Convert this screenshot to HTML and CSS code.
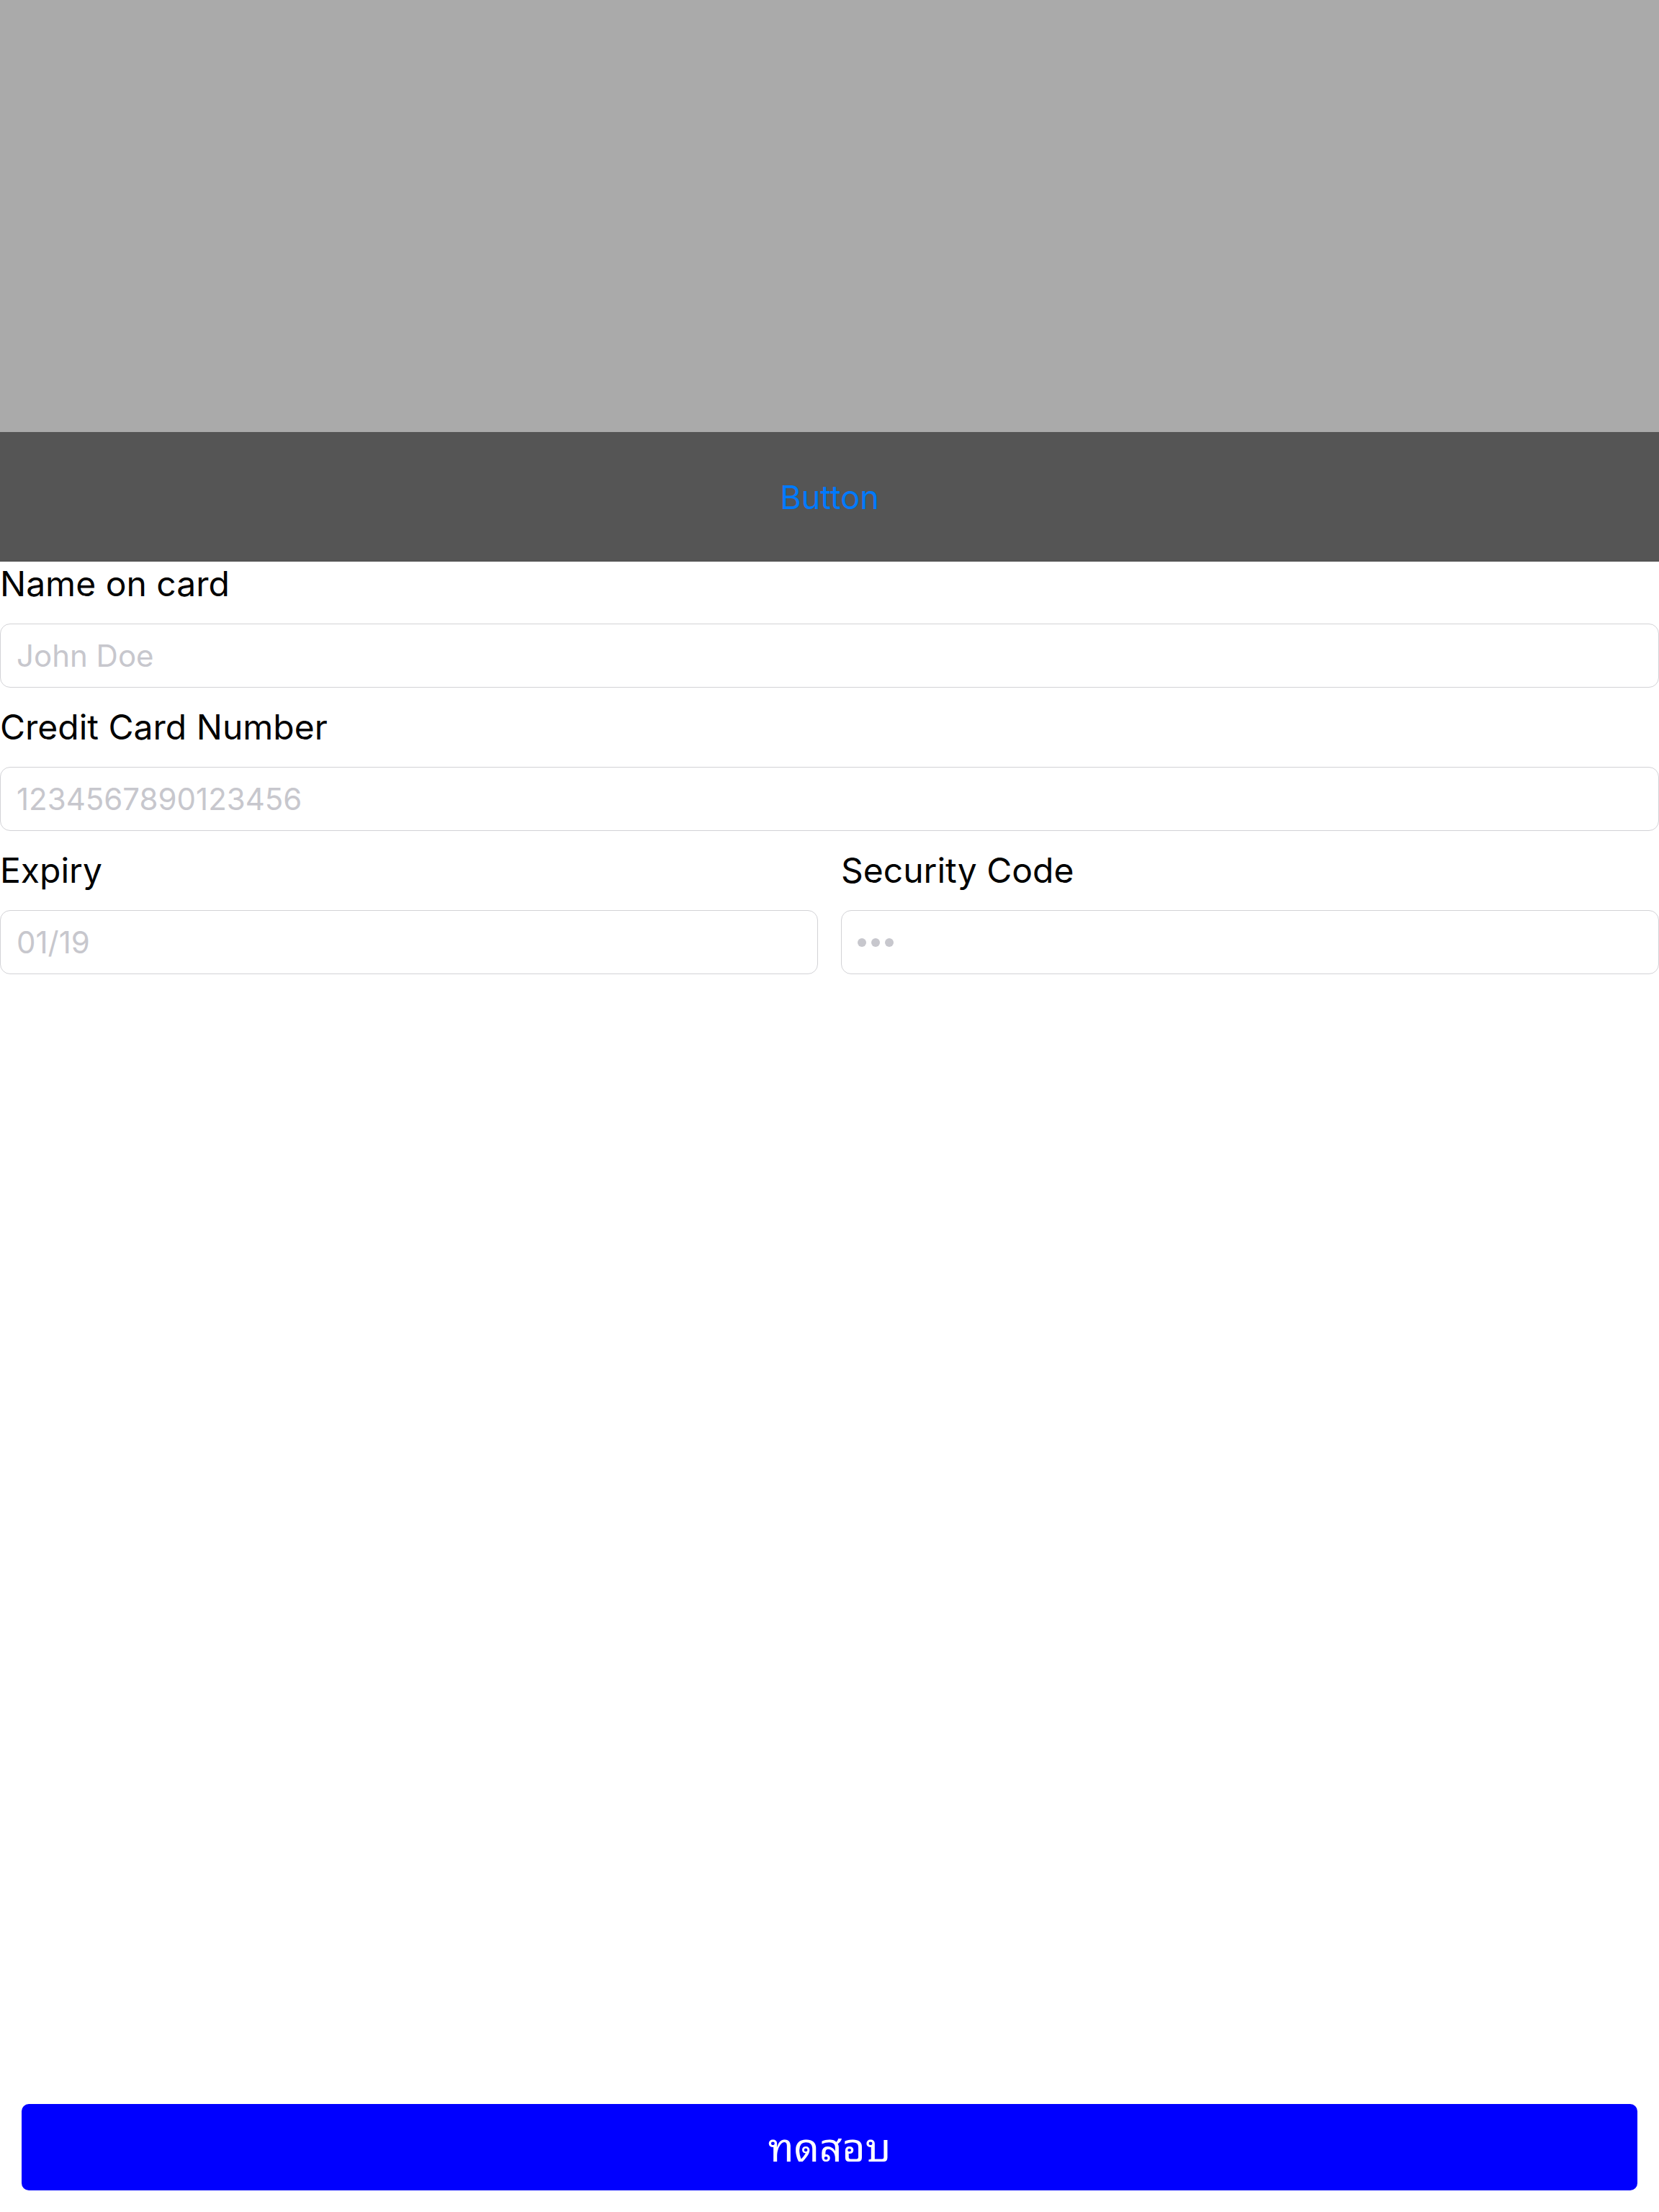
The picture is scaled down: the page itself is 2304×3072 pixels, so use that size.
FILE: index.html
```html
<!DOCTYPE html>
<html lang="en">
<head>
<meta charset="utf-8">
<title>Payment</title>
<link rel="stylesheet" href="styles.css">
</head>
<body>
<div class="page">
  <div class="hero"></div>
  <div class="bar"><span class="bar-button">Button</span></div>
  <div class="form">
    <div class="field first">
      <div class="label">Name on card</div>
      <div class="input"><span class="ph">John Doe</span></div>
    </div>
    <div class="field">
      <div class="label">Credit Card Number</div>
      <div class="input"><span class="ph">1234567890123456</span></div>
    </div>
    <div class="row">
      <div class="field">
        <div class="label">Expiry</div>
        <div class="input"><span class="ph">01/19</span></div>
      </div>
      <div class="field">
        <div class="label">Security Code</div>
        <div class="input"><span class="dots"><i></i><i></i><i></i></span></div>
      </div>
    </div>
  </div>
  <div class="footer">
    <div class="submit" lang="th">ทดสอบ</div>
  </div>
</div>
</body>
</html>
```
FILE: styles.css
```css
html, body {
  margin: 0;
  padding: 0;
  background: #ffffff;
}
body {
  font-family: Inter, Roboto, "Noto Sans", "Noto Sans Thai", sans-serif;
}
.page {
  display: flex;
  flex-direction: column;
  min-height: 3072px;
}
.hero {
  height: 600px;
  background: #aaaaaa;
}
.bar {
  height: 180px;
  background: #555555;
  display: flex;
  align-items: center;
  justify-content: center;
}
.bar-button {
  color: #007aff;
  font-size: 45px;
  line-height: 56px;
  margin-top: 2px;
}
.form {
  display: flex;
  flex-direction: column;
}
.field {
  display: flex;
  flex-direction: column;
  margin-top: 26px;
}
.field.first {
  margin-top: 0;
}
.label {
  font-size: 48px;
  line-height: 58px;
  color: #000000;
  margin-bottom: 26px;
}
.field.first .label {
  margin-top: 2px;
}
.input {
  box-sizing: border-box;
  height: 89px;
  border: 1.5px solid #d2d2d6;
  border-radius: 14px;
  padding: 0 22px;
  display: flex;
  align-items: center;
}
.ph {
  font-size: 42px;
  color: #c7c7cd;
}
.row {
  display: grid;
  grid-template-columns: 1fr 1fr;
  column-gap: 32px;
}
.dots {
  display: flex;
  gap: 7px;
}
.dots i {
  display: block;
  width: 12px;
  height: 12px;
  border-radius: 50%;
  background: #c7c7cd;
}
.footer {
  margin-top: auto;
  padding: 0 30px 30px;
}
.submit {
  box-sizing: border-box;
  height: 120px;
  padding-bottom: 10px;
  background: #0000ff;
  border-radius: 10px;
  color: #ffffff;
  display: flex;
  align-items: center;
  justify-content: center;
  font-family: "Noto Sans Thai Looped", Loma, Garuda, Norasi, "Noto Sans Thai", "Noto Sans", sans-serif;
  font-size: 55px;
}
```
